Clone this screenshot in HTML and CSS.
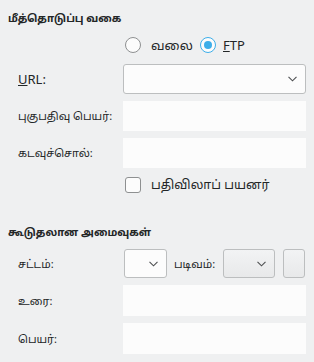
FILE: index.html
```html
<!DOCTYPE html>
<html lang="ta">
<head>
    <meta charset="UTF-8">
    <title>மீத்தொடுப்பு வகை</title>
    <link rel="stylesheet" href="styles.css">
</head>
<body>
<div class="page">
    <h2 class="group-title">மீத்தொடுப்பு வகை</h2>
    <div class="form">
        <div class="label"></div>
        <div class="radio-row">
            <label class="radio"><span class="dot"></span><span class="ta wide">வலை</span></label>
            <label class="radio"><span class="dot checked"></span><u>F</u>TP</label>
        </div>

        <div class="label"><u>U</u>RL:</div>
        <div class="combo">
            <svg class="chevron" width="9" height="6" viewBox="0 0 9 6"><polyline points="0.5,0.8 4.5,4.8 8.5,0.8" fill="none" stroke="#4d4f51" stroke-width="1.1"/></svg>
        </div>

        <div class="label ta">புகுபதிவு பெயர்:</div>
        <div class="field"></div>

        <div class="label ta">கடவுச்சொல்:</div>
        <div class="field"></div>

        <div class="label"></div>
        <label class="check-row"><span class="box"></span><span class="ta mid">பதிவிலாப் பயனர்</span></label>
    </div>

    <h2 class="group-title second">கூடுதலான அமைவுகள்</h2>
    <div class="form extra">
        <div class="label ta">சட்டம்:</div>
        <div class="combo-row">
            <div class="combo small">
                <svg class="chevron" width="9" height="6" viewBox="0 0 9 6"><polyline points="0.5,0.8 4.5,4.8 8.5,0.8" fill="none" stroke="#4d4f51" stroke-width="1.1"/></svg>
            </div>
            <span class="inline-label ta">படிவம்:</span>
            <div class="combo flat">
                <svg class="chevron" width="9" height="6" viewBox="0 0 9 6"><polyline points="0.5,0.8 4.5,4.8 8.5,0.8" fill="none" stroke="#4d4f51" stroke-width="1.1"/></svg>
            </div>
            <div class="tool-button"></div>
        </div>

        <div class="label ta">உரை:</div>
        <div class="field tall"></div>

        <div class="label ta">பெயர்:</div>
        <div class="field tall"></div>
    </div>
</div>
</body>
</html>
```

FILE: styles.css
```css
body {
    margin: 0px;
    padding: 0px;
    background: #eff0f1;
    font-family: 'Noto Sans', 'Noto Sans Tamil', sans-serif;
    font-size: 13px;
    color: #232627;
}

.page {
    padding: 8px 8px 0 8px;
}

.ta {
    font-size: 11px;
}

.ta.wide {
    font-size: 13px;
    display: inline-block;
    width: 32px;
    white-space: nowrap;
}

.ta.mid {
    font-size: 12.5px;
}

.group-title {
    margin: 0;
    font-size: 10.5px;
    font-weight: bold;
    height: 20px;
    line-height: 20px;
}

.group-title.second {
    margin-top: 27px;
}

.form {
    display: grid;
    grid-template-columns: 105px 183px;
    row-gap: 7px;
    padding-left: 10px;
    align-items: center;
}

.form.extra {
    margin-top: 7px;
}

.label {
    white-space: nowrap;
}

.radio-row {
    display: flex;
    align-items: center;
    height: 20px;
    margin-top: 7px;
    margin-bottom: 2px;
}

.radio {
    display: flex;
    align-items: center;
    margin-left: 2px;
    margin-right: 15px;
}

.dot {
    width: 14px;
    height: 14px;
    border: 1px solid #8e9091;
    border-radius: 50%;
    background: #fcfcfc;
    margin-right: 10px;
    position: relative;
    flex-shrink: 0;
}

.dot.checked {
    border-color: #3daee9;
    margin-right: 7px;
}

.dot.checked::after {
    content: '';
    position: absolute;
    left: 3px;
    top: 3px;
    width: 8px;
    height: 8px;
    border-radius: 50%;
    background: #3daee9;
}

.combo {
    height: 28px;
    border: 1px solid #bcbebf;
    border-radius: 3px;
    background: #fcfcfc;
    display: flex;
    align-items: center;
    justify-content: flex-end;
    padding-right: 8px;
    flex-shrink: 0;
}

.chevron {
    display: block;
}

.field {
    height: 30px;
    background: #fcfcfc;
}

.field.tall {
    height: 31px;
}

.check-row {
    display: flex;
    align-items: center;
    height: 20px;
}

.box {
    width: 14px;
    height: 14px;
    border: 1px solid #8e9091;
    border-radius: 3px;
    background: #fcfcfc;
    margin-left: 2px;
    margin-right: 10px;
}

.combo-row {
    display: flex;
    align-items: center;
}

.combo-row .combo {
    height: 27px;
}

.combo.small {
    width: 33px;
    margin-left: 1px;
}

.inline-label {
    margin-left: 7px;
    width: 49px;
    flex-shrink: 0;
    white-space: nowrap;
}

.combo.flat {
    width: 42px;
    background: linear-gradient(#f2f3f4, #e8e9ea);
}

.tool-button {
    width: 20px;
    height: 27px;
    margin-left: 8px;
    border: 1px solid #bcbebf;
    border-radius: 3px;
    background: linear-gradient(#f2f3f4, #e8e9ea);
    flex-shrink: 0;
}
```
